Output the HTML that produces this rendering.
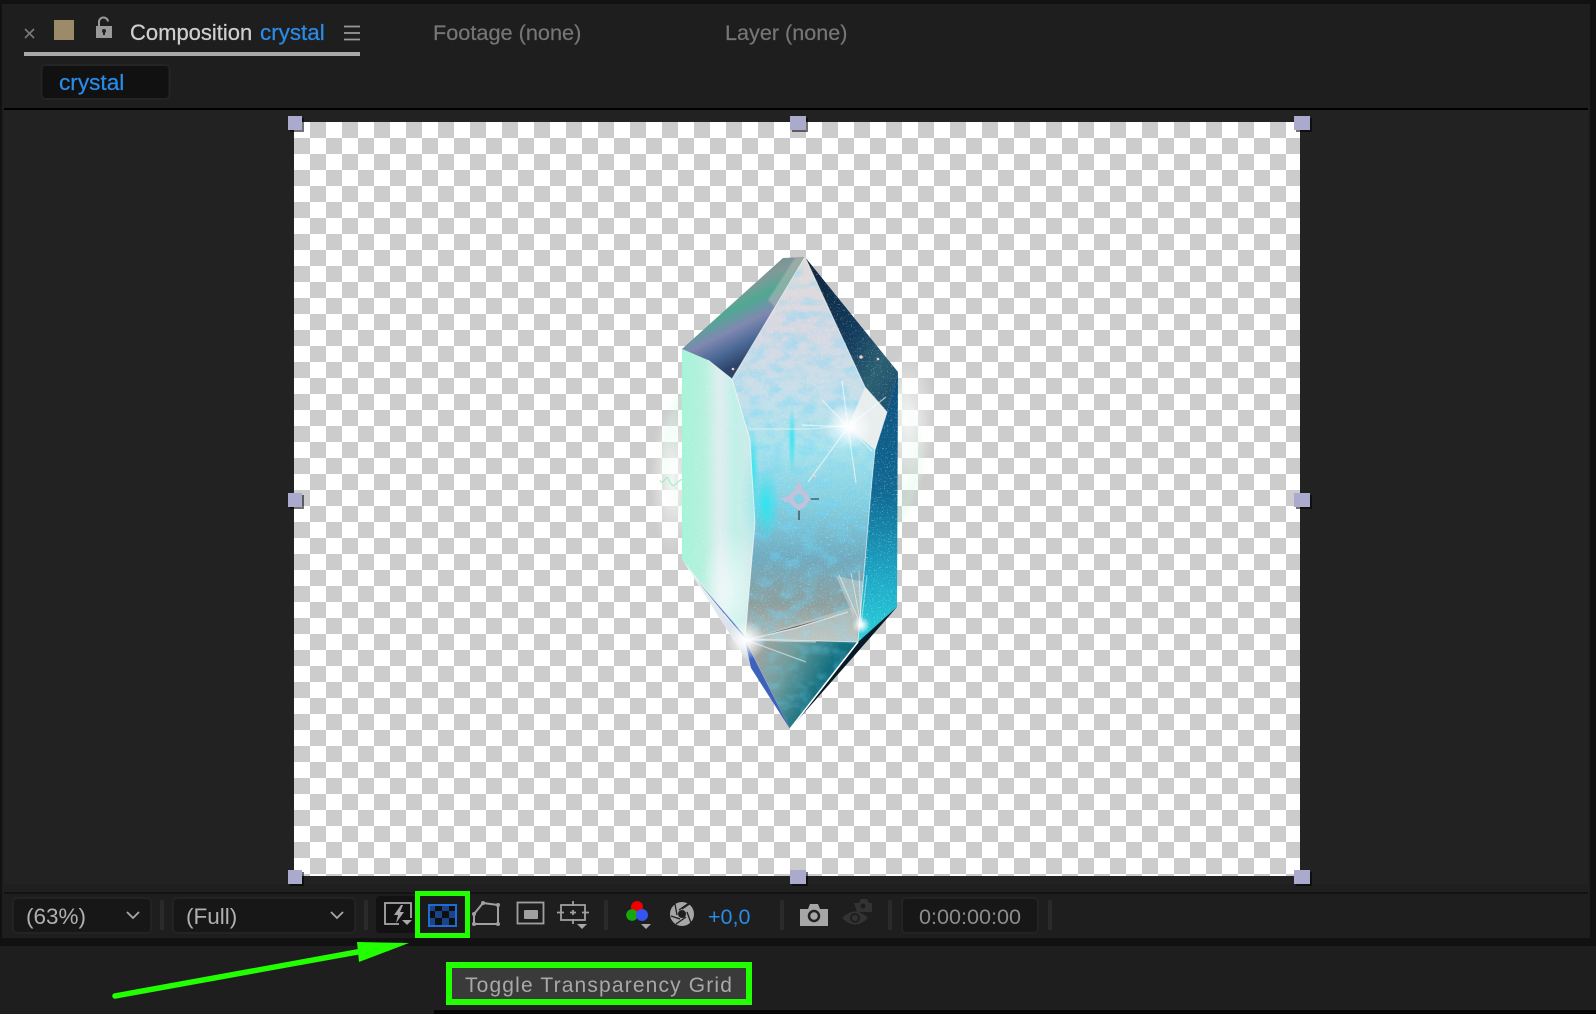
<!DOCTYPE html>
<html><head><meta charset="utf-8"><title>Composition crystal</title>
<style>
html,body{margin:0;padding:0;background:#111;width:1596px;height:1014px;overflow:hidden}
svg{display:block}
text{font-family:"Liberation Sans",sans-serif}
</style></head><body>
<svg xmlns="http://www.w3.org/2000/svg" width="1596" height="1014" viewBox="0 0 1596 1014">
<defs>
<pattern id="chk" x="294" y="122" width="32" height="32" patternUnits="userSpaceOnUse">
<rect width="32" height="32" fill="#fff"/><rect x="16" width="16" height="16" fill="#ccc"/><rect y="16" width="16" height="16" fill="#ccc"/>
</pattern>
<pattern id="gridp" x="428" y="904" width="14" height="14" patternUnits="userSpaceOnUse">
<rect width="14" height="14" fill="#0f0f0f"/><rect width="7" height="7" fill="#1a4488"/><rect x="7" y="7" width="7" height="7" fill="#1a4488"/>
</pattern>
<linearGradient id="gL" x1="0" y1="0" x2="1" y2="0"><stop offset="0" stop-color="#a5f4d8"/><stop offset=".3" stop-color="#b6f0de"/><stop offset=".52" stop-color="#dfeef0"/><stop offset=".72" stop-color="#c0f0e8"/><stop offset="1" stop-color="#d2e8e8"/></linearGradient>
<linearGradient id="gC" x1="0" y1="0" x2="0" y2="1"><stop offset="0" stop-color="#e2dcd8"/><stop offset=".18" stop-color="#d8d8e2"/><stop offset=".36" stop-color="#c6dfea"/><stop offset=".5" stop-color="#a6e2ec"/><stop offset=".64" stop-color="#84cfe0"/><stop offset=".78" stop-color="#6fabc0"/><stop offset=".9" stop-color="#8c9f9e"/><stop offset="1" stop-color="#b4bcb8"/></linearGradient>
<linearGradient id="gTL" x1=".3" y1=".15" x2=".62" y2=".8"><stop offset="0" stop-color="#6e8a88"/><stop offset=".25" stop-color="#7f9a98"/><stop offset=".42" stop-color="#4fa892"/><stop offset=".62" stop-color="#8088b0"/><stop offset=".82" stop-color="#4a6896"/><stop offset="1" stop-color="#2c4468"/></linearGradient>
<linearGradient id="gTR" x1="0" y1="0" x2="1" y2="1"><stop offset="0" stop-color="#0c2238"/><stop offset=".5" stop-color="#123a5c"/><stop offset=".75" stop-color="#2a5f72"/><stop offset="1" stop-color="#174a6a"/></linearGradient>
<linearGradient id="gR" x1="0" y1="0" x2="0" y2="1"><stop offset="0" stop-color="#0c4d7c"/><stop offset=".45" stop-color="#0f6a94"/><stop offset=".75" stop-color="#1ca6c4"/><stop offset="1" stop-color="#2ad0dc"/></linearGradient>
<linearGradient id="gB" x1="0" y1="0" x2="1" y2=".4"><stop offset="0" stop-color="#b8aaa6"/><stop offset=".42" stop-color="#709c9c"/><stop offset=".75" stop-color="#14707f"/><stop offset="1" stop-color="#0f6678"/></linearGradient>
<linearGradient id="gBL" x1="0" y1="0" x2="1" y2="1"><stop offset="0" stop-color="#eef8f8"/><stop offset=".5" stop-color="#d8dfe6"/><stop offset="1" stop-color="#a0a8c8"/></linearGradient>
<linearGradient id="gS" x1="0" y1="0" x2="1" y2="1"><stop offset="0" stop-color="#104a60"/><stop offset=".5" stop-color="#061826"/><stop offset="1" stop-color="#1c3c60"/></linearGradient>
<radialGradient id="burst"><stop offset="0" stop-color="#fff"/><stop offset=".25" stop-color="#fff" stop-opacity=".85"/><stop offset="1" stop-color="#fff" stop-opacity="0"/></radialGradient>
<radialGradient id="cy"><stop offset="0" stop-color="#27e6f0" stop-opacity=".9"/><stop offset="1" stop-color="#27e6f0" stop-opacity="0"/></radialGradient>
<radialGradient id="halo" cx=".5" cy=".5" r=".5"><stop offset=".78" stop-color="#c4f8da" stop-opacity="0"/><stop offset=".94" stop-color="#c4f8da" stop-opacity=".28"/><stop offset="1" stop-color="#c4f8da" stop-opacity="0"/></radialGradient>
<radialGradient id="wg"><stop offset="0" stop-color="#fff" stop-opacity=".75"/><stop offset="1" stop-color="#fff" stop-opacity="0"/></radialGradient>
<filter id="neb" x="0" y="0" width="100%" height="100%" color-interpolation-filters="sRGB"><feTurbulence type="fractalNoise" baseFrequency=".06 .09" numOctaves="4" seed="7"/><feColorMatrix values="0 0 0 0 .42  0 0 0 0 .84  0 0 0 0 .98  2.200 2.200 0 0 -2"/></filter>
<filter id="sp" x="0" y="0" width="100%" height="100%" color-interpolation-filters="sRGB"><feTurbulence type="fractalNoise" baseFrequency=".7" numOctaves="2" seed="3"/><feColorMatrix values="0 0 0 0 1  0 0 0 0 1  0 0 0 0 1  3 3 0 0 -3.400"/></filter>
<filter id="b2"><feGaussianBlur stdDeviation="3"/></filter>
<filter id="b1"><feGaussianBlur stdDeviation=".7"/></filter>
<clipPath id="cC"><polygon points="805,257 865,387 887,412 875,450 872,480 858,642 745,639 755,523 750,440 732,379"/></clipPath>
<clipPath id="cR"><polygon points="898,372 897,607 858,642 872,480 875,450 887,412"/></clipPath>
<clipPath id="cTR"><polygon points="805,257 898,372 887,412 865,387"/></clipPath>
<clipPath id="cB"><polygon points="745,639 858,642 790,729"/></clipPath>
<clipPath id="cL"><polygon points="682,349 708,360 732,379 750,440 755,523 745,639 682,559"/></clipPath>
</defs>

<!-- frame -->
<rect width="1596" height="1014" fill="#111"/>
<rect x="2" y="4" width="1588" height="934" fill="#1e1e1e"/>
<rect x="4" y="110" width="1584" height="774" fill="#222"/>
<rect x="4" y="108" width="1584" height="2" fill="#000"/>
<rect x="4" y="884" width="1584" height="8" fill="#1f1f1f"/>
<rect x="4" y="892" width="1584" height="2" fill="#131313"/>
<rect x="0" y="946" width="1596" height="64" fill="#1e1e1e"/>
<rect x="0" y="1010" width="434" height="4" fill="#1e1e1e"/>
<rect x="434" y="1010" width="1162" height="4" fill="#050505"/>

<!-- tab bar -->
<path d="M25 29l9 9M34 29l-9 9" stroke="#7a7a7a" stroke-width="1.600" fill="none"/>
<rect x="54" y="20" width="20" height="20" fill="#9c8a68"/>
<path d="M99 26v-3.500a4.500 4.500 0 0 1 9-1" fill="none" stroke="#999" stroke-width="2"/>
<path d="M96 26h16v12H96z" fill="#999"/>
<circle cx="104" cy="31" r="2" fill="#222"/><rect x="103" y="31" width="2" height="4" fill="#222"/>
<text x="130" y="40" font-size="22" fill="#cfcfcf" stroke="#cfcfcf" stroke-width=".25">Composition</text>
<text x="260" y="40" font-size="22.400" fill="#2b8ae6" stroke="#2b8ae6" stroke-width=".25">crystal</text>
<path d="M344 26.500h16M344 33h16M344 39.500h16" stroke="#999" stroke-width="1.800"/>
<rect x="24" y="52" width="336" height="4" fill="#a9a9a9"/>
<text x="433" y="40" font-size="21.700" fill="#767676" stroke="#767676" stroke-width=".2">Footage (none)</text>
<text x="725" y="40" font-size="21.600" fill="#767676" stroke="#767676" stroke-width=".2">Layer (none)</text>
<rect x="41.500" y="65" width="128" height="34" rx="4" fill="#111" stroke="#242424" stroke-width="2"/>
<text x="59" y="90" font-size="22.600" fill="#2b8ae6" stroke="#2b8ae6" stroke-width=".25">crystal</text>

<!-- canvas -->
<rect x="294" y="122" width="1006" height="754" fill="url(#chk)"/>

<!-- halo -->
<ellipse cx="792" cy="455" rx="134" ry="128" fill="url(#halo)"/>
<ellipse cx="908" cy="420" rx="28" ry="70" fill="url(#wg)"/>
<ellipse cx="672" cy="480" rx="22" ry="75" fill="url(#wg)"/>
<path d="M660 480c3 8 6-8 9 0s5 6 9 2 8-4 14 0 14-2 22-3 16 4 28 0" stroke="#8ff0bc" stroke-width="1.200" fill="none" opacity=".8"/>

<!-- crystal -->
<polygon points="682,349 708,360 732,379 750,440 755,523 745,639 682,559" fill="url(#gL)"/>
<g clip-path="url(#cL)">
<ellipse cx="760" cy="500" rx="20" ry="60" fill="url(#cy)" opacity=".4"/>
<ellipse cx="730" cy="590" rx="30" ry="60" fill="url(#burst)" opacity=".55"/>
<rect x="682" y="349" width="73" height="290" filter="url(#sp)" opacity=".3"/>
</g>
<polygon points="805,257 865,387 887,412 875,450 872,480 858,642 745,639 755,523 750,440 732,379" fill="url(#gC)"/>
<g clip-path="url(#cC)">
<rect x="732" y="257" width="155" height="385" filter="url(#neb)" opacity=".4"/>
<rect x="732" y="257" width="155" height="385" filter="url(#sp)" opacity=".35"/>
<ellipse cx="766" cy="505" rx="14" ry="38" fill="url(#cy)"/>
<ellipse cx="792" cy="440" rx="4" ry="36" fill="url(#cy)"/>
<ellipse cx="752" cy="470" rx="7" ry="46" fill="url(#cy)"/>
<path d="M865 387l22 25-12 38-27-23z" fill="#e8eeee"/>
<path d="M747 639l106-32 5 35z" fill="#cfd5cf" opacity=".42"/>
<path d="M860 632l-24-56 28 6z" fill="#dde4e2" opacity=".4"/>
<path d="M749 429h62l40-4" stroke="#d8f6f8" stroke-width="1.200" fill="none" opacity=".7"/>
</g>
<polygon points="783,258 805,257 732,379 708,360 682,349" fill="url(#gTL)"/>
<polygon points="795,258 805,257 775,307 768,300" fill="#c4c0bc" opacity=".45" filter="url(#b1)"/>
<polygon points="805,257 898,372 887,412 865,387" fill="url(#gTR)"/>
<rect x="805" y="257" width="93" height="155" filter="url(#sp)" clip-path="url(#cTR)" opacity=".35"/>
<polygon points="898,372 897,607 858,642 872,480 875,450 887,412" fill="url(#gR)"/>
<rect x="858" y="372" width="40" height="270" filter="url(#sp)" clip-path="url(#cR)" opacity=".45"/>
<polygon points="745,639 858,642 790,729" fill="url(#gB)"/>
<g clip-path="url(#cB)"><rect x="745" y="639" width="113" height="90" filter="url(#neb)" opacity=".28"/></g>
<polygon points="682,559 745,639 790,729" fill="url(#gBL)"/>
<polygon points="695,578 745,636 750,645" fill="#3f6cc0" opacity=".9"/>
<polygon points="745,640 790,729 751,668" fill="#3d62bc"/>
<polygon points="897,607 858,642 790,729" fill="url(#gS)"/>
<path d="M858 642l-68 87" stroke="#fff" stroke-width="1.500" fill="none"/>
<!-- edges -->
<path d="M805 257l-73 122-24-19M732 379l18 61 5 83-10 116 113 3 14-162 3-30 12-38-22-25-60-130" fill="none" stroke="#fff" stroke-width="1" opacity=".6"/>
<!-- bursts -->
<circle cx="848" cy="427" r="24" fill="url(#burst)"/>
<path d="M848 427L808 482M848 427l38-30M848 427l-6-46M848 427l8 56M848 427l-46 -2M848 427l24 24M848 427L822 400" stroke="#fff" stroke-width="1.200" opacity=".6"/>
<circle cx="746" cy="640" r="20" fill="url(#burst)"/>
<path d="M746 640l50-12 52-16M746 640l70 2M746 640l60 22M746 640l-22-26" stroke="#fff" stroke-width="1.200" opacity=".5"/>
<circle cx="861" cy="625" r="9" fill="url(#burst)"/>
<path d="M861 625l-22-50M861 625l-10-52M861 625l-2-54M861 625l6-50" stroke="#fff" stroke-width="1" opacity=".5"/>
<g fill="#f6c8c8"><circle cx="861" cy="357" r="1.800"/><circle cx="878" cy="359" r="1.300"/><circle cx="733" cy="369" r="1.300"/><circle cx="815" cy="476" r="1.300"/></g>

<!-- anchor point -->
<g>
<circle cx="799" cy="499" r="7.500" fill="none" stroke="#c2c2da" stroke-width="4.500"/>
<path d="M780 499l12-5v10zM799 480l-5 12h10z" fill="#c2c2da"/>
<path d="M808 499h11M799 508v12" stroke="#44626e" stroke-width="1.600"/>
<path d="M806 494l5 5-5 5zM794 506l5 5 5-5z" fill="#c2c2da"/>
</g>

<!-- handles -->
<g fill="#000" opacity=".55">
<rect x="290" y="118" width="14" height="14"/><rect x="792" y="118" width="16" height="14"/><rect x="1296" y="118" width="16" height="14"/>
<rect x="290" y="495" width="14" height="14"/><rect x="1296" y="495" width="16" height="14"/>
<rect x="290" y="872" width="14" height="14"/><rect x="792" y="872" width="16" height="14"/><rect x="1296" y="872" width="16" height="14"/>
</g>
<g fill="#aaaacc">
<rect x="288" y="116" width="14" height="14"/><rect x="790" y="116" width="16" height="14"/><rect x="1294" y="116" width="16" height="14"/>
<rect x="288" y="493" width="14" height="14"/><rect x="1294" y="493" width="16" height="14"/>
<rect x="288" y="870" width="14" height="14"/><rect x="790" y="870" width="16" height="14"/><rect x="1294" y="870" width="16" height="14"/>
</g>

<!-- toolbar -->
<rect x="13" y="898" width="138" height="35" rx="4" fill="#171717" stroke="#232323" stroke-width="2"/>
<text x="26" y="924" font-size="22.500" fill="#b0b0b0">(63%)</text>
<path d="M127 912l6 6 6-6" fill="none" stroke="#a8a8a8" stroke-width="1.800"/>
<rect x="160" y="900" width="4" height="30" fill="#2a2a2a"/>
<rect x="173" y="898" width="182" height="35" rx="4" fill="#171717" stroke="#232323" stroke-width="2"/>
<text x="186" y="924" font-size="22.500" fill="#b0b0b0">(Full)</text>
<path d="M331 912l6 6 6-6" fill="none" stroke="#a8a8a8" stroke-width="1.800"/>
<rect x="364" y="900" width="4" height="30" fill="#2a2a2a"/>
<rect x="376" y="896" width="44" height="37" rx="4" fill="#121212"/>
<!-- fast preview -->
<path d="M399 924h-14v-21h26v15" fill="none" stroke="#a8a8a8" stroke-width="1.800"/>
<path d="M401 905l-7 10h4l-2 8 8-11h-4l3-7z" fill="#a8a8a8"/>
<path d="M402 920h10l-5 5z" fill="#a8a8a8"/>
<!-- transparency grid -->
<rect x="420" y="896" width="45" height="37" rx="2" fill="#1a1a1a"/>
<rect x="417.500" y="893.500" width="50" height="42" fill="none" stroke="#22ff00" stroke-width="5"/>
<rect x="429" y="905" width="26" height="20" fill="url(#gridp)"/>
<rect x="429" y="905" width="27" height="21" fill="none" stroke="#1f6cd6" stroke-width="2"/>
<!-- mask -->
<path d="M474 914l9-11 15 2v19h-24z" fill="none" stroke="#a0a0a0" stroke-width="2"/>
<g fill="#a0a0a0"><circle cx="483" cy="903" r="2"/><circle cx="498" cy="905" r="2"/><circle cx="498" cy="924" r="2"/><circle cx="474" cy="924" r="2"/><circle cx="474" cy="914" r="2"/></g>
<!-- region -->
<rect x="517.500" y="902.500" width="26" height="21" fill="none" stroke="#a0a0a0" stroke-width="1.800"/>
<rect x="524" y="910" width="14" height="9" rx="1" fill="#a0a0a0"/>
<!-- grid/guides -->
<rect x="561" y="905" width="24" height="15" fill="none" stroke="#a0a0a0" stroke-width="1.800"/>
<path d="M573 901v5M573 919v5M557 912.500h7M582 912.500h7M570 912.500h6M573 910v5" stroke="#a0a0a0" stroke-width="1.800"/>
<path d="M577 924h10l-5 5z" fill="#a8a8a8"/>
<rect x="604" y="900" width="4" height="30" fill="#2a2a2a"/>
<!-- rgb -->
<circle cx="637" cy="907" r="6" fill="#f00000"/>
<circle cx="632" cy="915" r="5.800" fill="#17a80f"/>
<circle cx="642" cy="915" r="6" fill="#3355f0"/>
<path d="M641 924h10l-5 5z" fill="#a8a8a8"/>
<!-- aperture -->
<circle cx="682" cy="914" r="12" fill="#a6a6a6"/>
<g stroke="#1e1e1e" stroke-width="1.300" fill="none"><path d="M682 909l9-6M687 912l4 11M686 917l-10 7M680 919l-9-3M677 915l-2-11M679 910l10-7"/></g>
<circle cx="682" cy="914" r="4" fill="#1e1e1e"/>
<text x="708" y="924" font-size="21.500" fill="#2b8ae6">+0,0</text>
<rect x="780" y="900" width="4" height="30" fill="#2a2a2a"/>
<!-- camera -->
<path d="M800 909h8l2-5h8l2 5h8v17h-28z" fill="#a6a6a6"/>
<circle cx="814" cy="916" r="5" fill="none" stroke="#222" stroke-width="2.500"/>
<!-- eye -->
<path d="M842 918q13-13 26 0q-13 13-26 0z" fill="#333"/>
<circle cx="855" cy="918" r="5" fill="#1e1e1e"/><circle cx="855" cy="918" r="3" fill="#333"/>
<path d="M854 903h5l2-4h6l2 4h3v9h-15z" fill="#333"/><circle cx="863" cy="906" r="2.500" fill="#1e1e1e"/>
<rect x="888" y="900" width="4" height="30" fill="#2a2a2a"/>
<rect x="902" y="898" width="136" height="35" rx="4" fill="#171717" stroke="#232323" stroke-width="2"/>
<text x="919" y="924" font-size="21.600" fill="#8c8c8c">0:00:00:00</text>
<rect x="1048" y="900" width="4" height="30" fill="#2a2a2a"/>

<!-- arrow -->
<path d="M115 996L360 951.500" stroke="#22ff00" stroke-width="5.500" stroke-linecap="round"/>
<polygon points="409,943 357,942 359,962" fill="#22ff00"/>

<!-- tooltip -->
<rect x="449" y="965" width="300" height="37" fill="#3a3a3a" stroke="#22ff00" stroke-width="6"/>
<text x="465" y="992" font-size="21" letter-spacing="1.150" fill="#a8a8a8">Toggle Transparency Grid</text>
</svg>
</body></html>
